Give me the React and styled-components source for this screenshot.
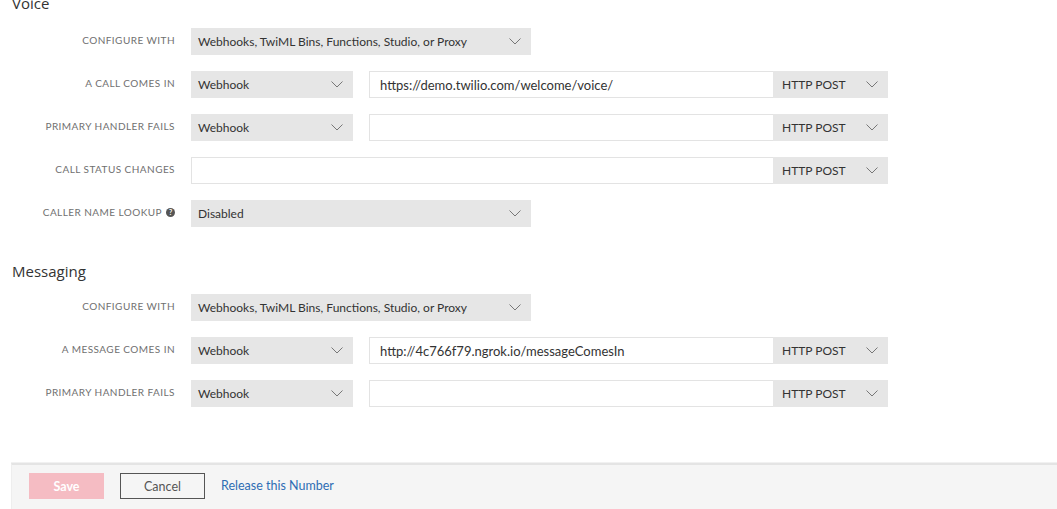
import React from 'react';
import styled, { createGlobalStyle } from 'styled-components';

const GlobalStyle = createGlobalStyle`
  html, body {
    margin: 0;
    padding: 0;
    background: #fff;
    overflow: hidden;
  }
  body {
    font-family: Lato, "Open Sans", Arial, sans-serif;
    color: #333;
  }
`;

const Page = styled.div`
  width: 1057px;
  height: 509px;
  overflow: hidden;
`;

const Content = styled.div`
  margin-top: -7px;
  padding-left: 12px;
`;

const Section = styled.section`
  margin-bottom: ${(p) => p.$after || 0}px;
`;

const Heading = styled.h2`
  margin: 0 0 ${(p) => p.$gap || 13}px 0;
  font-family: "Open Sans", Arial, sans-serif;
  font-size: 15px;
  line-height: 20px;
  font-weight: 400;
  color: #333;
`;

const Rows = styled.div`
  display: flex;
  flex-direction: column;
  gap: 16px;
  margin-left: -12px;
`;

const Row = styled.div`
  display: grid;
  grid-template-columns: 175px auto;
  column-gap: 16px;
  align-items: center;
`;

const Label = styled.div`
  display: flex;
  justify-content: flex-end;
  align-items: center;
  gap: 4px;
  padding-bottom: 3px;
  font-size: 10px;
  letter-spacing: 0.45px;
  text-transform: uppercase;
  color: #707070;
  white-space: nowrap;
`;

const HelpIcon = styled.span`
  display: inline-flex;
  align-items: center;
  justify-content: center;
  width: 9px;
  height: 9px;
  border-radius: 50%;
  background: #555;
  color: #fff;
  font-size: 7px;
  font-weight: 700;
  letter-spacing: 0;
  line-height: 1;
`;

const Controls = styled.div`
  display: flex;
  align-items: center;
  gap: 16px;
`;

const Group = styled.div`
  display: flex;
  align-items: stretch;
`;

const SelectBox = styled.div`
  box-sizing: border-box;
  width: ${(p) => p.$w}px;
  height: 27px;
  display: flex;
  align-items: center;
  justify-content: space-between;
  padding: 0 10px 0 ${(p) => p.$pl || 7}px;
  background: #e6e6e6;
  font-size: 12px;
  color: #333;
  white-space: nowrap;
`;

const TextInput = styled.div`
  box-sizing: border-box;
  width: ${(p) => p.$w}px;
  height: 27px;
  display: flex;
  align-items: center;
  padding: 0 10px;
  border: 1px solid #e3e3e3;
  border-right: none;
  background: #fff;
  font-size: 13px;
  color: #333;
  white-space: nowrap;
`;

const Chevron = () => (
  <svg width="12" height="7" viewBox="0 0 12 7" fill="none">
    <path d="M0.5 0.5 L6 6 L11.5 0.5" stroke="#777" strokeWidth="1" />
  </svg>
);

const Select = ({ w, pl, children }) => (
  <SelectBox $w={w} $pl={pl}>
    <span>{children}</span>
    <Chevron />
  </SelectBox>
);

const UrlField = ({ w, value }) => (
  <Group>
    <TextInput $w={w}>{value}</TextInput>
    <Select w={115} pl={9}>HTTP POST</Select>
  </Group>
);

const Footer = styled.div`
  margin-left: 11px;
  height: 60px;
  border-top: 2px solid #e4e4e4;
  box-shadow: 0 -1px 0 #f1f1f1;
  border-left: 1px solid #eee;
  background: #f5f5f5;
  display: flex;
  align-items: flex-start;
  gap: 16px;
  padding: 8px 0 0 17px;
`;

const Button = styled.button`
  box-sizing: border-box;
  height: 26px;
  width: ${(p) => p.$w}px;
  padding: 0;
  font-family: inherit;
  font-size: 12.5px;
  border-radius: 0;
  cursor: pointer;
  background: ${(p) => (p.$primary ? '#f5bcc3' : 'transparent')};
  color: ${(p) => (p.$primary ? '#fff' : '#555')};
  font-weight: ${(p) => (p.$primary ? 700 : 400)};
  border: ${(p) => (p.$primary ? 'none' : '1px solid #555')};
`;

const LinkText = styled.a`
  font-size: 12.5px;
  line-height: 25px;
  color: #2e6db4;
  text-decoration: none;
`;

const App = () => (
  <Page>
    <GlobalStyle />
    <Content>
      <Section $after={34}>
        <Heading $gap={15}>Voice</Heading>
        <Rows>
          <Row>
            <Label>Configure with</Label>
            <Controls>
              <Select w={340}>Webhooks, TwiML Bins, Functions, Studio, or Proxy</Select>
            </Controls>
          </Row>
          <Row>
            <Label>A call comes in</Label>
            <Controls>
              <Select w={162}>Webhook</Select>
              <UrlField w={404} value="https://demo.twilio.com/welcome/voice/" />
            </Controls>
          </Row>
          <Row>
            <Label>Primary handler fails</Label>
            <Controls>
              <Select w={162}>Webhook</Select>
              <UrlField w={404} value="" />
            </Controls>
          </Row>
          <Row>
            <Label>Call status changes</Label>
            <Controls>
              <UrlField w={582} value="" />
            </Controls>
          </Row>
          <Row>
            <Label>
              Caller name lookup <HelpIcon>?</HelpIcon>
            </Label>
            <Controls>
              <Select w={340}>Disabled</Select>
            </Controls>
          </Row>
        </Rows>
      </Section>
      <Section $after={56}>
        <Heading>Messaging</Heading>
        <Rows>
          <Row>
            <Label>Configure with</Label>
            <Controls>
              <Select w={340}>Webhooks, TwiML Bins, Functions, Studio, or Proxy</Select>
            </Controls>
          </Row>
          <Row>
            <Label>A message comes in</Label>
            <Controls>
              <Select w={162}>Webhook</Select>
              <UrlField w={404} value="http://4c766f79.ngrok.io/messageComesIn" />
            </Controls>
          </Row>
          <Row>
            <Label>Primary handler fails</Label>
            <Controls>
              <Select w={162}>Webhook</Select>
              <UrlField w={404} value="" />
            </Controls>
          </Row>
        </Rows>
      </Section>
    </Content>
    <Footer>
      <Button $primary $w={75}>Save</Button>
      <Button $w={85}>Cancel</Button>
      <LinkText href="#">Release this Number</LinkText>
    </Footer>
  </Page>
);

export default App;
